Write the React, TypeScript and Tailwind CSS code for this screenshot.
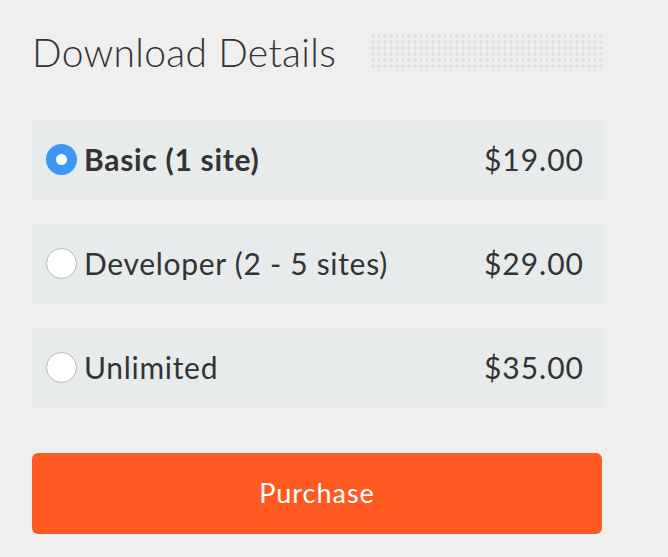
const plans = [
  { name: "Basic (1 site)", price: "$19.00", selected: true },
  { name: "Developer (2 - 5 sites)", price: "$29.00", selected: false },
  { name: "Unlimited", price: "$35.00", selected: false },
];

export default function App() {
  return (
    <main
      className="min-h-screen bg-[#efeff0] px-8 pt-[27px] text-[#333]"
      style={{ fontFamily: "Lato, 'Noto Sans', sans-serif" }}
    >
      <div className="w-[572px]">
        <header className="flex h-[50px] items-center gap-[34px]">
          <h1 className="text-[39px] font-light leading-none tracking-[0.3px]">
            Download Details
          </h1>
          <div className="h-[38px] w-[234px] bg-[radial-gradient(circle,#e0e3e6_1.6px,transparent_2px)] bg-[length:6px_6px]" />
        </header>

        <div className="mt-[42px] flex flex-col gap-6">
          {plans.map((plan) => (
            <label
              key={plan.name}
              className="flex h-20 items-center bg-[#e8ebec] pl-[14px] pr-5"
            >
              {plan.selected ? (
                <span className="flex h-[31px] w-[31px] items-center justify-center rounded-full bg-[#3d97f7]">
                  <span className="h-[11px] w-[11px] rounded-full bg-white" />
                </span>
              ) : (
                <span className="h-[31px] w-[31px] rounded-full border border-[#b9b9b9] bg-white" />
              )}
              <span
                className={
                  "ml-[7px] text-[30px] leading-none tracking-[0.7px] " +
                  (plan.selected ? "font-bold" : "font-normal")
                }
              >
                {plan.name}
              </span>
              <span className="ml-auto text-[30px] leading-none tracking-[1px]">
                {plan.price}
              </span>
            </label>
          ))}
        </div>

        <button className="mt-[46px] flex h-[81px] w-[570px] items-center justify-center rounded-md bg-[#ff5a22] text-[27px] tracking-[1px] text-white">
          Purchase
        </button>
      </div>
    </main>
  );
}
